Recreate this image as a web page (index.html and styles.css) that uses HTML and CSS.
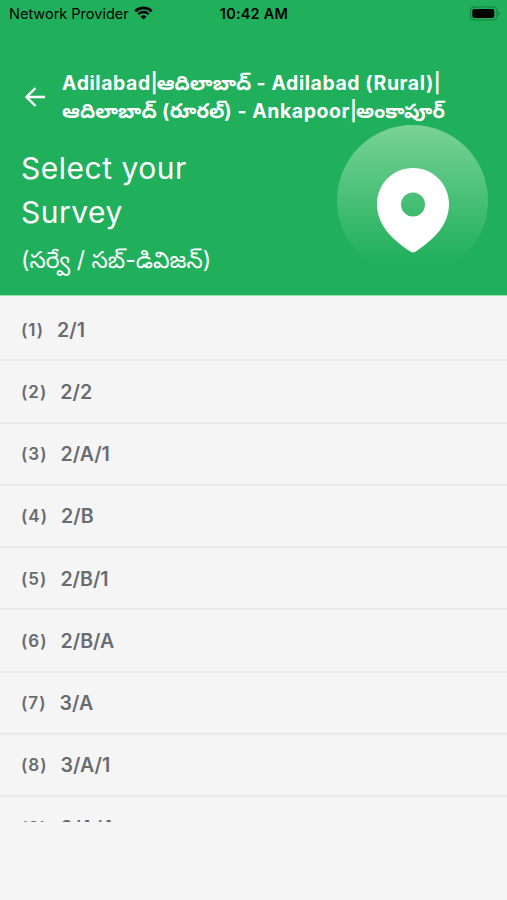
FILE: index.html
```
<!DOCTYPE html>
<html lang="en">

<head>
    <meta charset="UTF-8">
    <meta name="viewport" content="width=device-width, initial-scale=1.0">
    <title>Select your Survey</title>
    <link rel="stylesheet" href="styles.css">
</head>

<body>
    <div class="header">
        <div class="status">
            <div class="carrier">
                <span>Network Provider</span>
                <svg class="wifi" width="20" height="14" viewBox="0 0 20 14">
                    <path d="M1.3 5.2 A12 12 0 0 1 17.7 5.2" fill="none" stroke="#000" stroke-width="2.7" />
                    <path d="M4.3 8.2 A7.4 7.4 0 0 1 14.7 8.2" fill="none" stroke="#000" stroke-width="2.4" />
                    <path d="M9.5 13.6 L6.5 10.7 A4.3 4.3 0 0 1 12.5 10.7 Z" />
                </svg>
            </div>
            <div class="time">10:42 AM</div>
            <svg class="battery" width="32" height="16" viewBox="0 0 32 16">
                <rect x="1.5" y="1" width="26.5" height="13" rx="4" fill="none" stroke="#14803f" stroke-width="1.2" />
                <rect x="3.3" y="3" width="22" height="9" rx="2" />
                <path d="M29.3 5.5 Q31 6.3 31 7.5 Q31 8.7 29.3 9.5 Z" fill="#14803f" />
            </svg>
        </div>
        <div class="nav">
            <svg class="back" width="22" height="22" viewBox="0 0 22 22">
                <path d="M11.5 2 L2.5 11 L11.5 20 M2.5 11 H21" fill="none" stroke="#fff" stroke-width="2.4" />
            </svg>
            <div class="place">
                <div class="line">Adilabad<span class="bar">|</span><span class="te">ఆదిలాబాద్</span> - Adilabad (Rural)<span class="bar">|</span></div>
                <div class="line"><span class="te">ఆదిలాబాద్</span> (<span class="te">రూరల్</span>) - Ankapoor<span class="bar">|</span><span class="te">అంకాపూర్</span></div>
            </div>
        </div>
        <div class="banner">
            <div class="heading">
                <h1>Select your<br>Survey</h1>
                <p class="sub">(సర్వే / సబ్-డివిజన్)</p>
            </div>
            <div class="circle">
                <svg class="pin" width="72" height="86" viewBox="0 0 72 86">
                    <path fill="#fff" fill-rule="evenodd" d="M36 0 C16 0 0 16 0 36 C0 57 15 71 32.5 83 Q36 85.8 39.5 83 C57 71 72 57 72 36 C72 16 56 0 36 0 Z M36 24.5 A12 12 0 1 1 36 48.5 A12 12 0 1 1 36 24.5 Z" />
                </svg>
            </div>
        </div>
    </div>
    <ul class="list">
        <li><span class="num">(1)</span><span class="val">2/1</span></li>
        <li><span class="num">(2)</span><span class="val">2/2</span></li>
        <li><span class="num">(3)</span><span class="val">2/A/1</span></li>
        <li><span class="num">(4)</span><span class="val">2/B</span></li>
        <li><span class="num">(5)</span><span class="val">2/B/1</span></li>
        <li><span class="num">(6)</span><span class="val">2/B/A</span></li>
        <li><span class="num">(7)</span><span class="val">3/A</span></li>
        <li><span class="num">(8)</span><span class="val">3/A/1</span></li>
        <li><span class="num">(9)</span><span class="val">3/A/A</span></li>
    </ul>
</body>

</html>
```
FILE: styles.css
```
* {
    padding: 0;
    margin: 0;
    list-style: none;
    box-sizing: border-box;
}

body {
    background: #f5f5f5;
    font-family: Inter, "Noto Sans Telugu", sans-serif;
    height: 900px;
    overflow: hidden;
}

.header {
    height: 295px;
    background: #20b05c;
    color: #fff;
}

.status {
    display: flex;
    align-items: center;
    height: 27px;
    padding: 0 6px 0 9px;
    color: #000;
    font-size: 14.5px;
}

.carrier {
    display: flex;
    flex: 1;
    align-items: center;
    gap: 5px;
}

.wifi {
    margin-top: -1px;
}

.time {
    font-weight: 600;
    letter-spacing: 0.2px;
}

.battery {
    display: block;
    margin-left: 181px;
}

.nav {
    display: flex;
    align-items: center;
    height: 56px;
    margin-top: 42px;
    padding-left: 24px;
}

.place {
    margin-left: 16px;
    font-size: 19.4px;
    font-weight: 700;
    letter-spacing: 0.6px;
    line-height: 28px;
    white-space: nowrap;
}

.te {
    font-size: 20px;
    letter-spacing: 0;
    line-height: 1;
}

.bar {
    font-weight: 600;
    letter-spacing: -1px;
}

.banner {
    display: flex;
    justify-content: space-between;
    padding: 0 19px 0 21px;
}

.heading {
    padding-top: 21px;
}

.heading h1 {
    font-size: 30px;
    font-weight: 400;
    letter-spacing: 0.5px;
    line-height: 44px;
}

.sub {
    margin-top: 9px;
    font-size: 23.2px;
    line-height: 34px;
    white-space: nowrap;
}

.circle {
    display: flex;
    justify-content: center;
    width: 151px;
    height: 151px;
    padding-top: 43px;
    border-radius: 50%;
    background: linear-gradient(#78d296, #20b05c 90%);
}

.list {
    height: 527px;
    padding-top: 3px;
    overflow: hidden;
    border-top: 1px solid #92e3b1;
    color: #696c6f;
    font-weight: 600;
}

.list li {
    display: flex;
    align-items: center;
    height: 62.25px;
    padding: 1px 0 0 21px;
    border-bottom: 2px solid #e9e9e9;
}

.num {
    font-size: 17px;
    letter-spacing: 1px;
}

.val {
    margin-left: 13px;
    font-size: 19.6px;
}
```
